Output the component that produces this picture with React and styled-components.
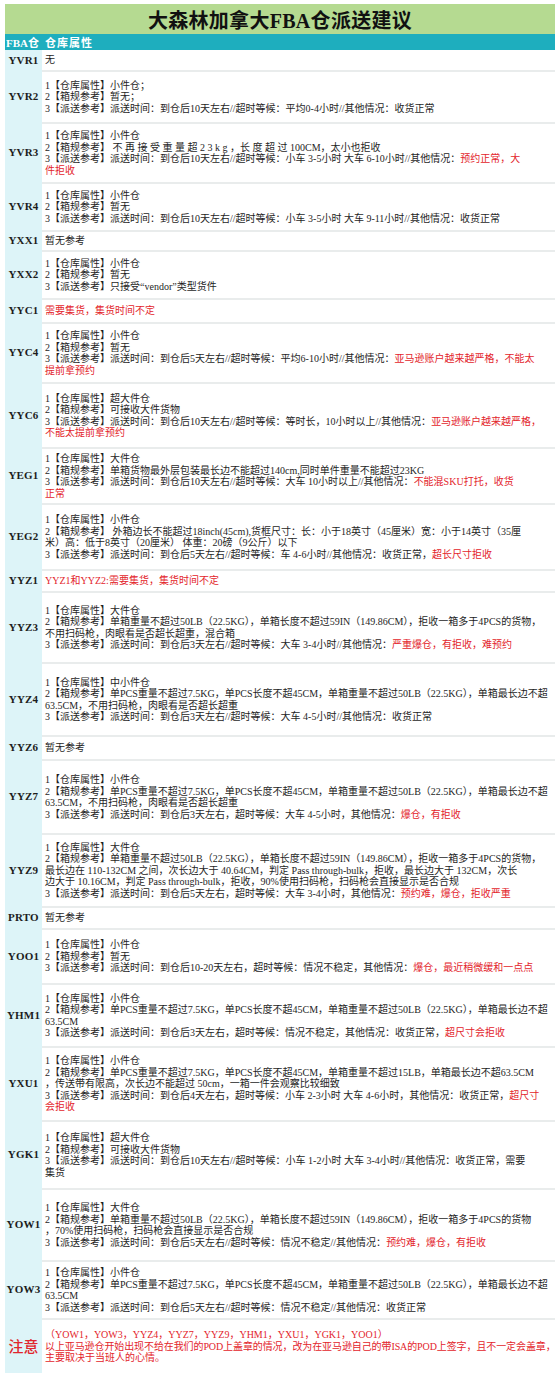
import React from "react";
import styled, { createGlobalStyle } from "styled-components";

const Global = createGlobalStyle`
  html, body { margin: 0; padding: 0; background: #ffffff; }
  body { font-family: "Liberation Serif", "Noto Sans CJK SC", serif; color: #1e1e1e; }
`;

const Page = styled.div`
  padding: 4px 5px 5px 5px;
  width: 550px;
`;

const Title = styled.div`
  height: 30px;
  background: #b5da91;
  display: flex;
  align-items: center;
  justify-content: center;
  font-family: "Liberation Serif", "Noto Sans CJK SC", serif;
  font-size: 20px;
  font-weight: 700;
  color: #111;
  letter-spacing: 0.3px;
`;

const Header = styled.div`
  height: 16px;
  background: #1eaebe;
  display: grid;
  grid-template-columns: 37px 1fr;
  align-items: center;
  color: #ffffff;
  font-family: "Liberation Serif", "Noto Sans CJK SC", serif;
  font-weight: 700;
  font-size: 11px;
`;

const HeaderCell = styled.div`
  padding-left: ${(p) => (p.$first ? "1px" : "3px")};
  white-space: nowrap;
  letter-spacing: ${(p) => (p.$first ? "0" : "1px")};
`;

const Row = styled.div`
  display: grid;
  grid-template-columns: 37px 1fr;
  min-height: ${(p) => p.$h}px;
`;

const Label = styled.div`
  background: #ddf4f8;
  display: flex;
  align-items: center;
  justify-content: center;
  font-family: "Liberation Serif", "Noto Sans CJK SC", serif;
  font-weight: ${(p) => (p.$note ? 500 : 700)};
  font-size: ${(p) => (p.$note ? "15px" : "11px")};
  color: ${(p) => (p.$note ? "#e0262d" : "#1c1c1c")};
  letter-spacing: ${(p) => (p.$note ? "0" : "0.2px")};
`;

const Content = styled.div`
  border-top: ${(p) => (p.$first ? "0" : "2px solid #e9ecec")};
  display: flex;
  flex-direction: column;
  justify-content: center;
  padding-left: 3px;
  min-width: 0;
`;

const Line = styled.div`
  font-size: 10px;
  line-height: 11.5px;
  white-space: pre;
  letter-spacing: ${(p) => (p.$tight ? "-0.1px" : "0")};
  color: #1e1e1e;
`;

const Red = styled.span`
  color: #e3242b;
`;

const r = (t) => ({ red: t });

const rows = [
  { id: "YVR1", h: 20, lines: [["无"]] },
  {
    id: "YVR2",
    h: 52,
    lines: [
      ["1【仓库属性】小件仓；"],
      ["2【箱规参考】暂无；"],
      ["3【派送参考】派送时间：到仓后10天左右//超时等候：平均0-4小时//其他情况：收货正常"],
    ],
  },
  {
    id: "YVR3",
    h: 60,
    lines: [
      ["1【仓库属性】小件仓"],
      ["2【箱规参考】 不 再 接 受 重 量 超 2 3 k g ，长 度 超 过 100CM，太小也拒收"],
      ["3【派送参考】派送时间：到仓后10天左右//超时等候：小车 3-5小时 大车 6-10小时//其他情况：", r("预约正常，大")],
      [r("件拒收")],
    ],
  },
  {
    id: "YVR4",
    h: 48,
    lines: [
      ["1【仓库属性】小件仓"],
      ["2【箱规参考】暂无"],
      ["3【派送参考】派送时间：到仓后10天左右//超时等候：小车 3-5小时 大车 9-11小时//其他情况：收货正常"],
    ],
  },
  { id: "YXX1", h: 20, lines: [["暂无参考"]] },
  {
    id: "YXX2",
    h: 48,
    lines: [
      ["1【仓库属性】小件仓"],
      ["2【箱规参考】暂无"],
      ["3【派送参考】只接受“vendor”类型货件"],
    ],
  },
  { id: "YYC1", h: 24, lines: [[r("需要集货，集货时间不定")]] },
  {
    id: "YYC4",
    h: 60,
    lines: [
      ["1【仓库属性】小件仓"],
      ["2【箱规参考】暂无"],
      ["3【派送参考】派送时间：到仓后5天左右//超时等候：平均6-10小时//其他情况：", r("亚马逊账户越来越严格，不能太")],
      [r("提前拿预约")],
    ],
  },
  {
    id: "YYC6",
    h: 65,
    lines: [
      ["1【仓库属性】超大件仓"],
      ["2【箱规参考】可接收大件货物"],
      ["3【派送参考】派送时间：到仓后10天左右//超时等候：等时长，10小时以上//其他情况：", r("亚马逊账户越来越严格，")],
      [r("不能太提前拿预约")],
    ],
  },
  {
    id: "YEG1",
    h: 56,
    lines: [
      ["1【仓库属性】大件仓"],
      ["2【箱规参考】单箱货物最外层包装最长边不能超过140cm,同时单件重量不能超过23KG"],
      ["3【派送参考】派送时间：到仓后10天左右//超时等候：大车 10小时以上//其他情况：", r("不能混SKU打托，收货")],
      [r("正常")],
    ],
  },
  {
    id: "YEG2",
    h: 66,
    lines: [
      ["1【仓库属性】小件仓"],
      ["2【箱规参考】 外箱边长不能超过18inch(45cm),货框尺寸：长：小于18英寸（45厘米）宽：小于14英寸（35厘"],
      ["米）高：低于8英寸（20厘米） 体重：20磅（9公斤）以下"],
      ["3【派送参考】派送时间：到仓后5天左右//超时等候：车 4-6小时//其他情况：收货正常，", r("超长尺寸拒收")],
    ],
  },
  { id: "YYZ1", h: 22, lines: [[r("YYZ1和YYZ2:需要集货，集货时间不定")]] },
  {
    id: "YYZ3",
    h: 71,
    lines: [
      ["1【仓库属性】大件仓"],
      ["2【箱规参考】单箱重量不超过50LB（22.5KG），单箱长度不超过59IN（149.86CM），拒收一箱多于4PCS的货物，"],
      ["不用扫码枪，肉眼看是否超长超重，混合箱"],
      ["3【派送参考】派送时间：到仓后3天左右//超时等候：大车 3-4小时//其他情况：", r("严重爆仓，有拒收，难预约")],
    ],
  },
  {
    id: "YYZ4",
    h: 73,
    lines: [
      ["1【仓库属性】中小件仓"],
      ["2【箱规参考】单PCS重量不超过7.5KG，单PCS长度不超45CM，单箱重量不超过50LB（22.5KG），单箱最长边不超"],
      ["63.5CM，不用扫码枪，肉眼看是否超长超重"],
      ["3【派送参考】派送时间：到仓后3天左右//超时等候：大车 4-5小时//其他情况：收货正常"],
    ],
  },
  { id: "YYZ6", h: 24, lines: [["暂无参考"]] },
  {
    id: "YYZ7",
    h: 74,
    lines: [
      ["1【仓库属性】小件仓"],
      ["2【箱规参考】单PCS重量不超过7.5KG，单PCS长度不超45CM，单箱重量不超过50LB（22.5KG），单箱最长边不超"],
      ["63.5CM，不用扫码枪，肉眼看是否超长超重"],
      ["3【派送参考】派送时间：到仓后3天左右，超时等候：大车 4-5小时，其他情况：", r("爆仓，有拒收")],
    ],
  },
  {
    id: "YYZ9",
    h: 73,
    lines: [
      ["1【仓库属性】大件仓"],
      ["2【箱规参考】单箱重量不超过50LB（22.5KG），单箱长度不超过59IN（149.86CM），拒收一箱多于4PCS的货物，"],
      ["最长边在 110-132CM 之间，次长边大于 40.64CM，判定 Pass through-bulk，拒收，最长边大于 132CM，次长"],
      ["边大于 10.16CM，判定 Pass through-bulk，拒收，90%使用扫码枪，扫码枪会直接显示是否合规"],
      ["3【派送参考】派送时间：到仓后5天左右，超时等候：大车 3-4小时，其他情况：", r("预约难，爆仓，拒收严重")],
    ],
  },
  { id: "PRTO", h: 22, lines: [["暂无参考"]] },
  {
    id: "YOO1",
    h: 55,
    lines: [
      ["1【仓库属性】小件仓"],
      ["2【箱规参考】暂无"],
      ["3【派送参考】派送时间：到仓后10-20天左右，超时等候：情况不稳定，其他情况：", r("爆仓，最近稍微缓和一点点")],
    ],
  },
  {
    id: "YHM1",
    h: 63,
    lines: [
      ["1【仓库属性】小件仓"],
      ["2【箱规参考】单PCS重量不超过7.5KG，单PCS长度不超45CM，单箱重量不超过50LB（22.5KG），单箱最长边不超"],
      ["63.5CM"],
      ["3【派送参考】派送时间：到仓后3天左右，超时等候：情况不稳定，其他情况：收货正常，", r("超尺寸会拒收")],
    ],
  },
  {
    id: "YXU1",
    h: 74,
    lines: [
      ["1【仓库属性】小件仓"],
      ["2【箱规参考】单PCS重量不超过7.5KG，单PCS长度不超45CM，单箱重量不超过15LB，单箱最长边不超63.5CM"],
      ["，传送带有限高，次长边不能超过 50cm，一箱一件会观察比较细致"],
      ["3【派送参考】派送时间：到仓后4天左右，超时等候：小车 2-3小时 大车 4-6小时，其他情况：收货正常，", r("超尺寸")],
      [r("会拒收")],
    ],
  },
  {
    id: "YGK1",
    h: 68,
    lines: [
      ["1【仓库属性】超大件仓"],
      ["2【箱规参考】可接收大件货物"],
      ["3【派送参考】派送时间：到仓后10天左右//超时等候：小车 1-2小时 大车 3-4小时//其他情况：收货正常，需要"],
      ["集货"],
    ],
  },
  {
    id: "YOW1",
    h: 72,
    lines: [
      ["1【仓库属性】大件仓"],
      ["2【箱规参考】单箱重量不超过50LB（22.5KG），单箱长度不超过59IN（149.86CM），拒收一箱多于4PCS的货物"],
      ["，70%使用扫码枪，扫码枪会直接显示是否合规"],
      ["3【派送参考】派送时间：到仓后5天左右//超时等候：情况不稳定//其他情况：", r("预约难，爆仓，有拒收")],
    ],
  },
  {
    id: "YOW3",
    h: 58,
    lines: [
      ["1【仓库属性】小件仓"],
      ["2【箱规参考】单PCS重量不超过7.5KG，单PCS长度不超45CM，单箱重量不超过50LB（22.5KG），单箱最长边不超"],
      ["63.5CM"],
      ["3【派送参考】派送时间：到仓后5天左右//超时等候：情况不稳定//其他情况：收货正常"],
    ],
  },
  {
    id: "注意",
    note: true,
    h: 55,
    lines: [
      [r("（YOW1，YOW3，YYZ4，YYZ7，YYZ9，YHM1，YXU1，YGK1，YOO1）")],
      [r("以上亚马逊仓开始出现不给在我们的POD上盖章的情况，改为在亚马逊自己的带ISA的POD上签字，且不一定会盖章，")],
      [r("主要取决于当班人的心情。")],
    ],
    tight: [1],
  },
];

function Segments({ parts }) {
  return parts.map((p, i) =>
    typeof p === "string" ? <React.Fragment key={i}>{p}</React.Fragment> : <Red key={i}>{p.red}</Red>
  );
}

export default function App() {
  return (
    <>
      <Global />
      <Page>
        <Title>大森林加拿大FBA仓派送建议</Title>
        <Header>
          <HeaderCell $first>FBA仓</HeaderCell>
          <HeaderCell>仓库属性</HeaderCell>
        </Header>
        {rows.map((row, idx) => (
          <Row key={row.id} $h={row.h}>
            <Label $note={row.note}>{row.id}</Label>
            <Content $first={idx === 0}>
              {row.lines.map((ln, i) => (
                <Line key={i} $tight={row.tight && row.tight.includes(i)}>
                  <Segments parts={ln} />
                </Line>
              ))}
            </Content>
          </Row>
        ))}
      </Page>
    </>
  );
}
